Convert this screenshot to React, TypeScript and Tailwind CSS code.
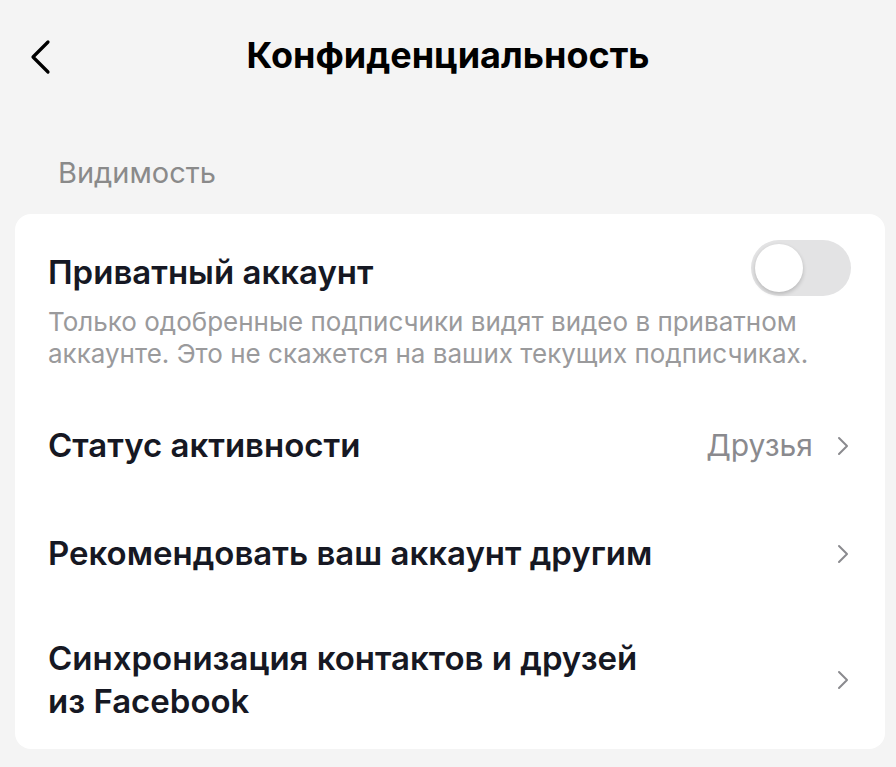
import { ChevronRight } from "lucide-react";

const font = { fontFamily: 'Inter, "DejaVu Sans", "Liberation Sans", Arial, sans-serif' };

function Row({ title, value }: { title: React.ReactNode; value?: string }) {
  return (
    <div className="flex items-center justify-between">
      <div className="text-[33px] font-semibold leading-[43px] text-[#161823]">{title}</div>
      <div className="flex items-center gap-[14px]">
        {value && <span className="text-[30px] leading-[43px] text-[#8a8a8e]">{value}</span>}
        <ChevronRight className="-mr-[8px] h-[32px] w-[32px] text-[#8a8a8e]" strokeWidth={1.5} />
      </div>
    </div>
  );
}

export default function App() {
  return (
    <div className="min-h-[767px] w-[896px] bg-[#f4f4f4]" style={font}>
      {/* Header */}
      <div className="relative flex h-[110px] items-center justify-center">
        <svg className="absolute left-[28px] top-[39px]" width="24" height="36" viewBox="0 0 24 36" fill="none">
          <path d="M20 3 L5 18 L20 33" stroke="#000" strokeWidth="3.2" strokeLinecap="round" strokeLinejoin="round" />
        </svg>
        <h1 className="text-[36px] font-bold leading-[44px] text-black">Конфиденциальность</h1>
      </div>

      <div className="px-[58px] pt-[48px] pb-[26px] text-[29px] leading-[30px] text-[#8a8a8a]">Видимость</div>

      {/* Card */}
      <div className="mx-[15px] mr-[11px] rounded-[16px] bg-white pl-[33px] pr-[34px] pt-[26px] pb-[26px]">
        <div className="flex items-center justify-between">
          <div className="pt-[8px] text-[33px] font-semibold leading-[40px] text-[#161823]">Приватный аккаунт</div>
          <div className="relative h-[56px] w-[100px] rounded-full bg-[#e3e3e4]">
            <div className="absolute left-[4px] top-[4px] h-[48px] w-[48px] rounded-full bg-white shadow-[0_2px_4px_rgba(0,0,0,0.2)]" />
          </div>
        </div>
        <p className="mt-[10px] text-[26px] leading-[32px] text-[#9a9a9c]">
          Только одобренные подписчики видят видео в приватном аккаунте. Это не скажется на ваших текущих подписчиках.
        </p>

        <div className="mt-[54px]">
          <Row title="Статус активности" value="Друзья" />
        </div>
        <div className="mt-[65px]">
          <Row title="Рекомендовать ваш аккаунт другим" />
        </div>
        <div className="mt-[62px]">
          <Row
            title={
              <>
                Синхронизация контактов и друзей
                <br />
                из Facebook
              </>
            }
          />
        </div>
      </div>
    </div>
  );
}
